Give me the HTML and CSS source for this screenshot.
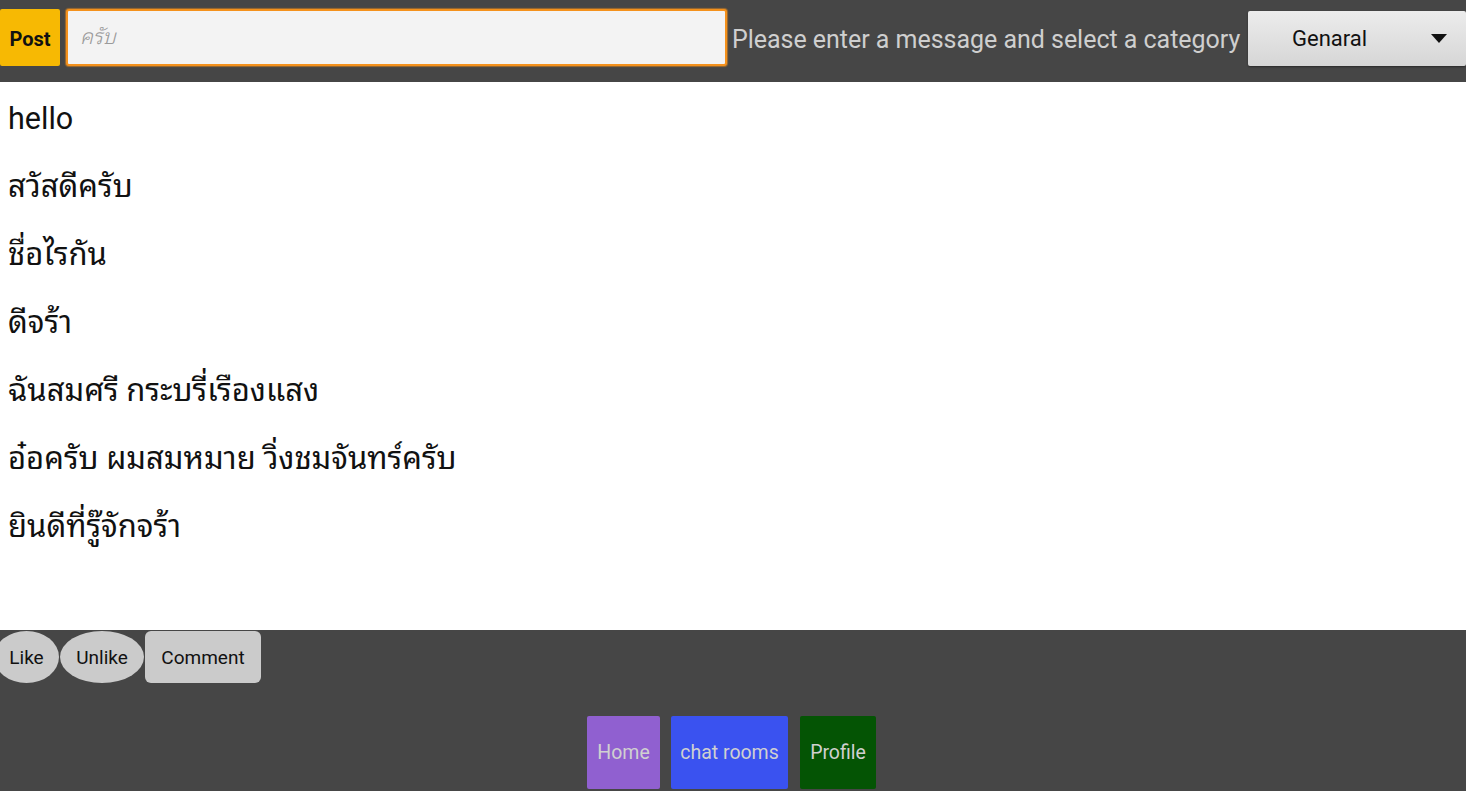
FILE: index.html
```html
<!DOCTYPE html>
<html lang="th">
<head>
<meta charset="utf-8">
<title>Chat</title>
<link rel="stylesheet" href="styles.css">
</head>
<body>
<header class="topbar">
  <button class="post-btn">Post</button>
  <div class="msg-input"><span class="placeholder">ครับ</span></div>
  <span class="hint">Please enter a message and select a category</span>
  <div class="select">
    <span class="select-label">Genaral</span>
    <svg class="caret" width="16" height="9" viewBox="0 0 16 9"><path d="M0 0 L16 0 L8 9 Z" fill="#111"/></svg>
  </div>
</header>
<main class="messages">
  <div class="msg">hello</div>
  <div class="msg th">สวัสดีครับ</div>
  <div class="msg th">ชื่อไรกัน</div>
  <div class="msg th">ดีจร้า</div>
  <div class="msg th">ฉันสมศรี กระบรี่เรืองแสง</div>
  <div class="msg th">อ๋อครับ ผมสมหมาย วิ่งชมจันทร์ครับ</div>
  <div class="msg th">ยินดีที่รู๊จักจร้า</div>
</main>
<footer class="bottom">
  <div class="actions">
    <button class="act oval like">Like</button>
    <button class="act oval unlike">Unlike</button>
    <button class="act comment">Comment</button>
  </div>
  <nav class="nav">
    <button class="nav-btn home">Home</button>
    <button class="nav-btn rooms">chat rooms</button>
    <button class="nav-btn profile">Profile</button>
  </nav>
</footer>
</body>
</html>
```
FILE: styles.css
```css
* { box-sizing: border-box; }
html, body { margin: 0; padding: 0; }
body {
  width: 1466px;
  height: 791px;
  overflow: hidden;
  font-family: Roboto, "Noto Sans Thai Looped", "Noto Sans", sans-serif;
  background: #464646;
  display: flex;
  flex-direction: column;
}
button { font-family: inherit; border: none; padding: 0; cursor: pointer; }

.topbar {
  height: 82px;
  background: #464646;
  display: flex;
  align-items: flex-start;
  padding-top: 9px;
}
.post-btn {
  width: 60px;
  height: 57px;
  background: #f7b903;
  border-radius: 2px;
  font-weight: bold;
  font-size: 20px;
  color: #111;
  padding-top: 2px;
}
.msg-input {
  margin-left: 6px;
  width: 661px;
  height: 57px;
  border: 2px solid #f4911c;
  border-radius: 3px;
  background: #f3f3f3;
  padding: 7px 12px;
  box-shadow: 0 0 1px 1px rgba(244,145,28,0.5);
}
.placeholder {
  font-family: "Noto Sans Thai Looped", Roboto, sans-serif;
  font-style: italic;
  font-weight: 300;
  color: #9a9a9a;
  font-size: 21px;
}
.hint {
  margin-left: 5px;
  margin-top: 16px;
  color: #cfcfcf;
  font-size: 25px;
  letter-spacing: -0.03px;
  white-space: nowrap;
}
.select {
  margin-left: auto;
  margin-top: 2px;
  width: 218px;
  height: 55px;
  background: linear-gradient(#ececec, #d6d6d6);
  border-radius: 2px;
  display: flex;
  align-items: center;
  padding-left: 44px;
  padding-right: 19px;
  box-shadow: 0 1px 2px rgba(0,0,0,0.4);
}
.select-label { font-size: 22px; color: #111; }
.caret { margin-left: auto; }

.messages {
  height: 548px;
  background: #fff;
  padding: 3px 0 0 8px;
}
.msg {
  height: 68px;
  line-height: 68px;
  font-size: 30.5px;
  color: #111;
}
.th { font-weight: 400; font-size: 31px; }

.bottom {
  flex: 1;
  background: #464646;
  display: flex;
  flex-direction: column;
}
.actions {
  display: flex;
  gap: 1px;
  padding-top: 1px;
}
.act {
  height: 52px;
  background: #cbcbcb;
  font-size: 19px;
  color: #111;
}
.oval { border-radius: 50%; }
.like { width: 65px; margin-left: -6px; }
.unlike { width: 84px; }
.comment { width: 116px; border-radius: 6px; }

.nav {
  display: flex;
  justify-content: center;
  gap: 11px;
  margin-top: 33px;
  padding-right: 3px;
}
.nav-btn {
  height: 73px;
  font-size: 19.5px;
  color: #d0d0d0;
  border-radius: 2px;
}
.home { width: 73px; background: #9060d0; }
.rooms { width: 117px; background: #3a52f0; }
.profile { width: 76px; background: #045404; margin-left: 1px; }
```
